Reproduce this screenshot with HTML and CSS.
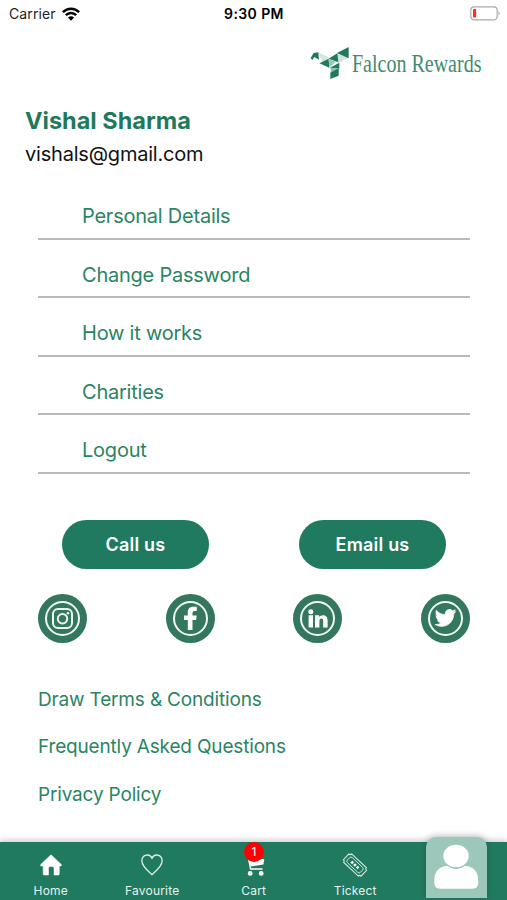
FILE: index.html
```html
<!DOCTYPE html>
<html lang="en">
<head>
    <meta charset="UTF-8">
    <meta name="viewport" content="width=device-width, initial-scale=1.0">
    <title>Falcon Rewards</title>
    <link rel="stylesheet" href="styles.css">
</head>
<body>
    <div class="wrap">
        <div class="status_bar">
            <div class="carrier">
                <span>Carrier</span>
                <svg width="18" height="14" viewBox="0 0 18 14" fill="none" stroke="#000" stroke-width="2.5">
                    <path d="M.9 5.1C5.5.5 12.5.5 17.1 5.1"/>
                    <path d="M3.8 8.2C6.8 5.3 11.2 5.3 14.2 8.2"/>
                    <path d="M9 13.7L5.900 10.6Q9 8 12.1 10.6Z" fill="#000" stroke="none"/>
                </svg>
            </div>
            <p class="time">9:30 PM</p>
            <svg class="battery" width="31" height="15" viewBox="0 0 31 15">
                <rect x=".8" y=".8" width="26.4" height="13" rx="3.5" fill="#fff" stroke="#aaa" stroke-width="1.2"/>
                <rect x="3" y="3" width="3.2" height="8.5" rx=".8" fill="#ff2d20"/>
                <path d="M28.500 5Q31 7.3 28.500 9.6Z" fill="#aaa"/>
            </svg>
        </div>

        <div class="logo">
            <svg width="38" height="32" viewBox="33 33 114 96">
                <path d="M54 49L90 65L68 79Z" fill="#d3e6de"/>
                <path d="M88 67L112 51L145 65L117 80Z" fill="#cfe3db"/>
                <path d="M32 66L41 51L55 49L57 71L43 63L37 72Z" fill="#1f7a5c"/>
                <path d="M111 51L146 33V67Z" fill="#1f7a5c"/>
                <path d="M58 82L86 68L88 95Z" fill="#1f7a5c"/>
                <path d="M86 68L112 52L115 79Z" fill="#1f7a5c"/>
                <path d="M86 68L108 77L88 95Z" fill="#9cc9b8"/>
                <path d="M90 95L118 80V98Z" fill="#1f7a5c"/>
                <path d="M92 95L118 98L92 112Z" fill="#8fc0ad"/>
                <path d="M91 110L116 97V119L91 129Z" fill="#1f7a5c"/>
            </svg>
            <span class="logo_text">Falcon Rewards</span>
        </div>

        <div class="profile">
            <h1>Vishal Sharma</h1>
            <p>vishals@gmail.com</p>
        </div>

        <ul class="menu">
            <li><a href="#">Personal Details</a></li>
            <li><a href="#">Change Password</a></li>
            <li><a href="#">How it works</a></li>
            <li><a href="#">Charities</a></li>
            <li><a href="#">Logout</a></li>
        </ul>

        <div class="btn_wrap">
            <a href="#">Call us</a>
            <a href="#">Email us</a>
        </div>

        <div class="sns">
            <a href="#">
                <svg width="49" height="49" viewBox="0 0 49 49" fill="none" stroke="#f0f8f4" stroke-width="2">
                    <circle cx="24.5" cy="24.5" r="16.5"/>
                    <rect x="15" y="15" width="19" height="19" rx="5"/>
                    <circle cx="24.5" cy="24.8" r="4.7"/>
                    <circle cx="30" cy="19.2" r="1.3" fill="#f0f8f4" stroke="none"/>
                </svg>
            </a>
            <a href="#">
                <svg width="49" height="49" viewBox="0 0 49 49">
                    <circle cx="24.5" cy="24.5" r="16.5" fill="none" stroke="#f0f8f4" stroke-width="2"/>
                    <path d="M21.8 36V26H18V21.6H21.8V18.5C21.8 14.5 24 12.8 27.3 12.8H30.8V17H28.7C27 17 26.5 17.8 26.5 19.2V21.6H30.7L30.1 26H26.5V36Z" fill="#fff"/>
                </svg>
            </a>
            <a href="#">
                <svg width="49" height="49" viewBox="0 0 49 49">
                    <circle cx="24.5" cy="24.5" r="16.5" fill="none" stroke="#f0f8f4" stroke-width="2"/>
                    <circle cx="17.8" cy="17.7" r="2.5" fill="#fff"/>
                    <path d="M15.6 21.300H20V33.500H15.600ZM22 21.300H26V23.100C28.400 20 34.600 20.400 34.600 26V33.500H30.200V26.900C30.200 23.600 26.400 23.700 26.400 26.900V33.500H22Z" fill="#fff"/>
                </svg>
            </a>
            <a href="#">
                <svg width="49" height="49" viewBox="0 0 49 49">
                    <circle cx="24.5" cy="24.5" r="16.5" fill="none" stroke="#f0f8f4" stroke-width="2"/>
                    <path transform="translate(14 13.5) scale(.87)" d="M23.953 4.570a10 10 0 01-2.825.775 4.958 4.958 0 002.163-2.723c-.951.555-2.005.959-3.127 1.184a4.920 4.920 0 00-8.384 4.482C7.690 8.095 4.067 6.130 1.640 3.162a4.822 4.822 0 00-.666 2.475c0 1.710.870 3.213 2.188 4.096a4.904 4.904 0 01-2.228-.616v.060a4.923 4.923 0 003.946 4.827 4.996 4.996 0 01-2.212.085 4.936 4.936 0 004.604 3.417 9.867 9.867 0 01-6.102 2.105c-.390 0-.779-.023-1.170-.067a13.995 13.995 0 007.557 2.209c9.053 0 13.998-7.496 13.998-13.985 0-.210 0-.420-.015-.630A9.935 9.935 0 0024 4.590z" fill="#fff" stroke="#fff" stroke-width=".7"/>
                </svg>
            </a>
        </div>

        <div class="links">
            <a href="#">Draw Terms &amp; Conditions</a>
            <a href="#">Frequently Asked Questions</a>
            <a href="#">Privacy Policy</a>
        </div>

        <!-- bottom tab -->
        <div class="tab_bar">
            <a href="#">
                <svg width="22" height="22" viewBox="0 0 22 22">
                    <path d="M11 .8L21.300 10.500V12H19.300V20Q19.300 21 18.300 21H14V14.200Q14 12.500 12.500 12.500H10Q8.500 12.500 8.500 14.200V21H4.200Q3.200 21 3.200 20V12H.7V10.500Z" fill="#fff" stroke="#fff" stroke-width=".5"/>
                </svg>
                <span>Home</span>
            </a>
            <a href="#">
                <svg width="22" height="22" viewBox="0 0 22 22">
                    <path d="M11 20.700C7.500 17.400.9 12.500.9 7.100C.9.4 8.700-1 11 4.200C13.300-1 21.100.4 21.100 7.100C21.100 12.500 14.500 17.400 11 20.700Z" fill="none" stroke="#dff0e8" stroke-width="1.300"/>
                </svg>
                <span>Favourite</span>
            </a>
            <a href="#" class="cart">
                <svg width="22" height="22" viewBox="0 0 22 22">
                    <path d="M3 2L5.500 5H20.300L19.400 10.500L6.700 12.500Z" fill="#fff"/>
                    <path d="M2 2L4.300 3.500L6.500 15H18.500" fill="none" stroke="#fff" stroke-width="1.300"/>
                    <circle cx="6.200" cy="19.400" r="2.400" fill="#fff"/>
                    <circle cx="17.200" cy="19.400" r="2.400" fill="#fff"/>
                </svg>
                <span>Cart</span>
                <em class="badge">1</em>
            </a>
            <a href="#">
                <svg width="22" height="22" viewBox="0 0 22 22" fill="none" stroke="#d5ebe1">
                    <g transform="rotate(43 11 11)">
                        <path d="M1 5.200H21Q21 7 23 7V15Q21 15 21 16.800H1Q1 15 -1 15V7Q1 7 1 5.200Z" stroke-width="1.100"/>
                        <rect x="2" y="7.500" width="18" height="7" rx="2" stroke-width=".9"/>
                        <path d="M6 11H16.500" stroke="#fff" stroke-width="2.600" stroke-dasharray="2.400 1.300"/>
                    </g>
                </svg>
                <span>Tickect</span>
            </a>
            <a href="#" class="my">
                <svg width="61" height="61" viewBox="0 0 61 61" fill="#fff">
                    <path d="M22 29C13 29 8.300 35 8.300 43V46Q8.300 51.700 14 51.700H46.500Q52.200 51.700 52.200 46V43C52.200 35 47.500 29 38.500 29Q30 35 22 29Z"/>
                    <ellipse cx="30" cy="19" rx="13.300" ry="11.800" stroke="#9bc8ba" stroke-width="1.200"/>
                </svg>
            </a>
        </div>
    </div>
</body>
</html>
```

FILE: styles.css
```css
* {
    margin: 0;
    padding: 0;
    box-sizing: border-box;
}

body {
    background-color: #fff;
    font-family: Inter, "Liberation Sans", sans-serif;
}

a {
    color: #2b8463;
    text-decoration: none;
}

ul {
    list-style: none;
}

svg {
    display: block;
    overflow: visible;
}

.wrap {
    display: flex;
    flex-direction: column;
    width: 507px;
    height: 900px;
    overflow: hidden;
}

.status_bar {
    display: grid;
    grid-template-columns: 1fr auto 1fr;
    align-items: center;
    height: 27px;
    padding: 0 6px 0 9px;
    font-size: 14px;
}

.carrier {
    display: flex;
    align-items: center;
    gap: 6px;
    color: #222;
    letter-spacing: 0.1px;
}

.time {
    padding-right: 2px;
    font-weight: 600;
    letter-spacing: 0.4px;
}

.battery {
    justify-self: end;
}

.logo {
    display: flex;
    justify-content: flex-end;
    gap: 3px;
    height: 32px;
    margin: 20px 25px 0 0;
}

.logo_text {
    width: 130px;
    color: #3f8b70;
    font-family: "Liberation Serif", serif;
    font-size: 25px;
    line-height: 33px;
    white-space: nowrap;
    transform: scaleX(0.8);
    transform-origin: left;
}

.profile {
    padding: 26px 26px 0 25px;
}

.profile h1 {
    color: #1f7a5c;
    font-size: 23.5px;
    font-weight: 700;
    line-height: 32px;
}

.profile p {
    margin-top: 1px;
    color: #111;
    font-size: 20px;
    line-height: 32px;
    letter-spacing: -0.2px;
}

.menu {
    margin: 11px 37px 0 38px;
}

.menu li {
    height: 58.6px;
    padding: 19px 0 0 44px;
    border-bottom: 2px solid #b9b9b9;
    font-size: 20px;
    line-height: 32px;
    letter-spacing: -0.23px;
}

.btn_wrap {
    display: flex;
    justify-content: space-between;
    margin: 46px 61px 0 62px;
}

.btn_wrap a {
    width: 147px;
    height: 49px;
    border-radius: 25px;
    background-color: #207a5f;
    color: #fff;
    font-size: 18px;
    font-weight: 600;
    line-height: 50px;
    letter-spacing: 0.2px;
    text-align: center;
}

.sns {
    display: flex;
    justify-content: space-between;
    margin: 25px 37px 0 38px;
}

.sns a {
    width: 49px;
    height: 49px;
    border-radius: 50%;
    background-color: #33775f;
}

.links {
    display: flex;
    flex-direction: column;
    gap: 17.5px;
    margin: 42px 0 0 38px;
    font-size: 19px;
    line-height: 30px;
    letter-spacing: -0.17px;
}

.tab_bar {
    display: flex;
    height: 58px;
    margin-top: auto;
    background-color: #207a5f;
    box-shadow: 0 -2px 6px rgba(0, 0, 0, 0.2);
}

.tab_bar a {
    display: flex;
    flex-direction: column;
    align-items: center;
    flex: 1;
    padding-top: 12px;
    color: #e6f3ed;
    font-size: 12px;
    line-height: 16px;
}

.tab_bar span {
    margin-top: 7px;
    letter-spacing: 0.2px;
}

.tab_bar .cart {
    position: relative;
}

.tab_bar .cart svg {
    margin-left: 3px;
}

.badge {
    position: absolute;
    left: 41px;
    top: 0;
    width: 20px;
    height: 20px;
    border-radius: 50%;
    background-color: #f00;
    color: #fff;
    font-size: 12px;
    font-style: normal;
    line-height: 20px;
    text-align: center;
}

.tab_bar .my {
    flex: none;
    width: 61px;
    height: 61px;
    margin: -5px 20px 0;
    padding: 0;
    border-radius: 10px 10px 0 0;
    background-color: #9bc8ba;
    box-shadow: 0 -2px 6px rgba(0, 0, 0, 0.2);
}
```
